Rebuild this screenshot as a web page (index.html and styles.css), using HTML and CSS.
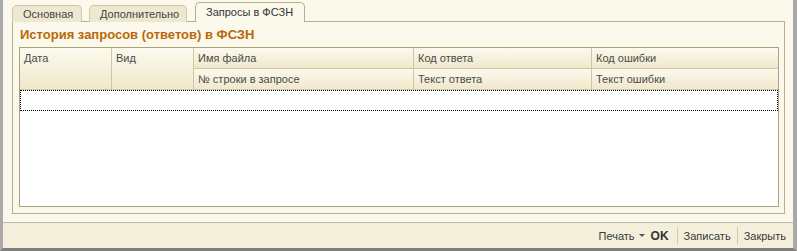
FILE: index.html
```html
<!DOCTYPE html>
<html lang="ru">
<head>
  <meta charset="UTF-8" />
  <title>Запросы в ФСЗН</title>
  <link rel="stylesheet" href="styles.css">
</head>
<body>
  <div class="window">
    <div class="main">
      <div class="tabs">
        <div class="tab tab-first">Основная</div>
        <div class="tab tab-second">Дополнительно</div>
        <div class="tab active">Запросы в ФСЗН</div>
      </div>

      <div class="panel">
        <div class="group-title">История запросов (ответов) в ФСЗН</div>
        <div class="table">
          <div class="table-head">
            <div class="th span2">Дата</div>
            <div class="th span2">Вид</div>
            <div class="th">Имя файла</div>
            <div class="th">Код ответа</div>
            <div class="th last">Код ошибки</div>
            <div class="th">№ строки в запросе</div>
            <div class="th">Текст ответа</div>
            <div class="th last">Текст ошибки</div>
          </div>
          <div class="table-body">
            <div class="row focused"></div>
          </div>
        </div>
      </div>
    </div>

    <div class="footer">
      <span class="cmd">Печать <span class="drop"></span></span>
      <span class="cmd ok">OK</span>
      <span class="sep"></span>
      <span class="cmd">Записать</span>
      <span class="sep"></span>
      <span class="cmd">Закрыть</span>
    </div>
  </div>
</body>
</html>
```

FILE: styles.css
```css
body {
  margin: 0;
  padding: 0;
  background: #fff;
  font-family: "Liberation Sans", Arial, sans-serif;
  font-size: 11px;
  color: #333;
}

.window {
  width: 797px;
  height: 251px;
  box-sizing: border-box;
  display: flex;
  flex-direction: column;
  background: #fbf9eb;
  border-left: 3px solid #a9a9a9;
  border-right: 4px solid #a9a9a9;
  border-bottom: 3px solid #7f7f7f;
}

.main {
  flex: 1;
  display: flex;
  flex-direction: column;
  padding: 3px 8px 8px 9px;
}

/* tabs */
.tabs {
  display: flex;
  align-items: flex-end;
  gap: 7px;
  height: 19px;
  margin-bottom: -1px;
  position: relative;
  z-index: 1;
}

.tab {
  height: 17px;
  line-height: 17px;
  box-sizing: border-box;
  padding: 0 9px 0 10px;
  background: #eee8d0;
  border: 1px solid #cfc8a8;
  border-bottom: none;
  border-radius: 5px 5px 0 0;
  color: #444;
  white-space: nowrap;
}

.tab-first {
  width: 70px;
}

.tab-second {
  width: 98px;
}

.tab.active {
  width: 110px;
  height: 20px;
  line-height: 19px;
  margin-left: 1px;
  background: #fbf9eb;
  border-color: #b7b08c;
  color: #333;
}

.panel {
  flex: 1;
  display: flex;
  flex-direction: column;
  border: 1px solid #b7b08c;
  padding: 5px 5px 6px 6px;
}

.group-title {
  height: 15px;
  line-height: 15px;
  padding-left: 1px;
  font-size: 13px;
  font-weight: bold;
  color: #b8690a;
  margin-bottom: 5px;
  white-space: nowrap;
}

/* table */
.table {
  flex: 1;
  display: flex;
  flex-direction: column;
  border: 1px solid #aba37e;
  background: #fff;
}

.table-head {
  display: grid;
  grid-template-columns: 92px 82px 220px 178px 1fr;
  grid-template-rows: 21px 21px;
}

.th {
  box-sizing: border-box;
  padding: 0 4px;
  line-height: 20px;
  border-right: 1px solid #cfc7a3;
  border-bottom: 1px solid #cfc7a3;
  background: linear-gradient(#fcfaee, #efe8cb);
  color: #4a4a4a;
  white-space: nowrap;
}

.th.span2 {
  grid-row: span 2;
  background: linear-gradient(#fcfaee, #f6f1dc 50%, #efe8cb);
}

.th.last {
  border-right: none;
}

.table-body {
  flex: 1;
}

.row {
  height: 21px;
  box-sizing: border-box;
}

.row.focused {
  border: 1px dotted #000;
}

/* footer */
.footer {
  height: 26px;
  box-sizing: border-box;
  display: flex;
  align-items: center;
  justify-content: flex-end;
  gap: 6px;
  padding-right: 7px;
  background: #f3efdb;
  border-top: 1px solid #c4bc96;
  color: #3a3a3a;
}

.cmd {
  display: flex;
  align-items: center;
  gap: 4px;
}

.drop {
  width: 0;
  height: 0;
  border-left: 3px solid transparent;
  border-right: 3px solid transparent;
  border-top: 3px solid #555;
}

.cmd.ok {
  font-size: 12px;
  font-weight: bold;
  color: #333;
  margin-right: 2px;
}

.sep {
  width: 1px;
  height: 17px;
  background: #d2cba9;
}
```
